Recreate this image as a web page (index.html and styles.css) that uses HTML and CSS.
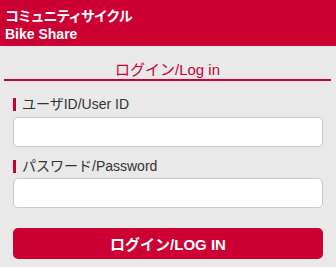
FILE: index.html
```html
<!DOCTYPE html>
<html lang="ja">
<head>
  <meta charset="UTF-8">
  <meta name="viewport" content="width=device-width, initial-scale=1.0">
  <title>コミュニティサイクル Bike Share</title>
  <link rel="stylesheet" href="styles.css">
</head>
<body>

  <!-- Header -->
  <header class="site-header">
    <div class="site-title site-title-ja">コミュニティサイクル</div>
    <div class="site-title">Bike Share</div>
  </header>

  <!-- Login form -->
  <main class="login">
    <h1 class="login-title">ログイン/Log in</h1>

    <form class="login-form">
      <label class="field-label" for="user-id">ユーザID/User ID</label>
      <input class="field-input" id="user-id" type="text">

      <label class="field-label" for="password">パスワード/Password</label>
      <input class="field-input" id="password" type="password">

      <button class="login-btn" type="submit">ログイン/LOG IN</button>
    </form>
  </main>

</body>
</html>
```

FILE: styles.css
```css
body {
  margin: 0;
  padding: 0;
  background: #e9e9e9;
  font-family: "Liberation Sans", "Noto Sans CJK JP", sans-serif;
  color: #333;
}

/* Header */
.site-header {
  background: #cc0033;
  padding: 7px 5px 3px;
  height: 36px;
}

.site-title {
  color: white;
  font-size: 14px;
  font-weight: bold;
  line-height: 18px;
}

.site-title-ja {
  letter-spacing: -1.2px;
}

/* Login */
.login {
  padding: 16px 0 0;
}

.login-title {
  margin: 0 5px 0 4px;
  padding-bottom: 1px;
  border-bottom: 2px solid #cc0033;
  color: #cc0033;
  font-size: 15px;
  font-weight: normal;
  line-height: 16px;
  text-align: center;
}

.login-form {
  display: flex;
  flex-direction: column;
  padding: 17px 13px 0;
}

.field-label {
  border-left: 3px solid #cc0033;
  padding-left: 6px;
  font-size: 14px;
  line-height: 13px;
  margin-bottom: 6px;
}

.field-input {
  height: 30px;
  box-sizing: border-box;
  border: 1px solid #c8c8c8;
  border-radius: 5px;
  background: white;
  margin: 0 0 13px;
}

.field-input + .field-label {
  margin-bottom: 5px;
}

.login-btn {
  margin-top: 7px;
  height: 31px;
  border: none;
  border-radius: 5px;
  background: #cc0033;
  color: white;
  font-family: inherit;
  font-size: 15px;
  font-weight: bold;
}
```
